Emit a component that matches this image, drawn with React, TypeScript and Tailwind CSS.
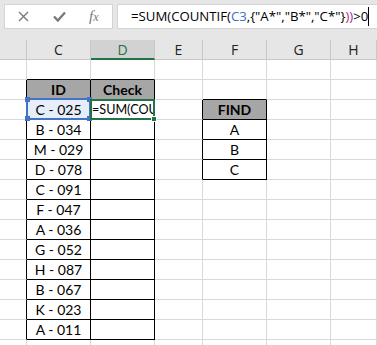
const ids = [
  "C - 025",
  "B - 034",
  "M - 029",
  "D - 078",
  "C - 091",
  "F - 047",
  "A - 036",
  "G - 052",
  "H - 087",
  "B - 067",
  "K - 023",
  "A - 011",
];

const find = ["FIND", "A", "B", "C"];
const letters = ["", "C", "D", "E", "F", "G", "H"];

// rows 0..14 under the column header, cols 0..6
function inTable(r: number, c: number) {
  if ((c === 1 || c === 2) && r >= 1 && r <= 13) return true;
  if (c === 4 && r >= 2 && r <= 5) return true;
  return false;
}

function cellText(r: number, c: number) {
  if (r === 1 && c === 1) return "ID";
  if (r === 1 && c === 2) return "Check";
  if (c === 1 && r >= 2 && r <= 13) return ids[r - 2];
  if (c === 4 && r >= 2 && r <= 5) return find[r - 2];
  return "";
}

function isHead(r: number, c: number) {
  return (r === 1 && (c === 1 || c === 2)) || (r === 2 && c === 4);
}

function Cell({ r, c }: { r: number; c: number }) {
  const rightBlack = inTable(r, c) || inTable(r, c + 1);
  const bottomBlack = inTable(r, c) || inTable(r + 1, c);
  const head = isHead(r, c);
  const selected = r === 2 && c === 1;
  const active = r === 2 && c === 2;

  return (
    <div
      className={[
        "relative h-5 border-r border-b flex items-center justify-center text-[14px] leading-none text-black whitespace-nowrap",
        rightBlack ? "border-r-black" : "border-r-[#d9d9d9]",
        bottomBlack ? "border-b-black" : "border-b-[#d9d9d9]",
        head ? "bg-[#a6a6a6] font-bold" : selected ? "bg-[#e6eef9]" : "bg-white",
      ].join(" ")}
    >
      {active ? (
        <span className="absolute left-[1px] top-0 h-full flex items-center overflow-hidden w-[62px] text-[12.6px] pt-[1px]">
          =SUM(COU
        </span>
      ) : (
        <span className="pt-[1px]">{cellText(r, c)}</span>
      )}
      {selected && (
        <div className="absolute -left-[1px] -top-[2px] -right-[1px] -bottom-[1px] border-2 border-[#4472c4] z-10">
          <div className="absolute -left-[3px] -top-[3px] w-[5px] h-[5px] bg-[#4472c4]" />
          <div className="absolute -right-[3px] -top-[3px] w-[5px] h-[5px] bg-[#4472c4]" />
          <div className="absolute -left-[3px] -bottom-[3px] w-[5px] h-[5px] bg-[#4472c4]" />
          <div className="absolute -right-[3px] -bottom-[3px] w-[5px] h-[5px] bg-[#4472c4]" />
        </div>
      )}
      {active && (
        <div className="absolute -left-[1px] -top-[1px] -right-[1px] -bottom-[1px] border-2 border-[#217346] z-20">
          <div className="absolute -right-[4px] -bottom-[4px] w-[6px] h-[6px] bg-[#217346] border border-white" />
        </div>
      )}
    </div>
  );
}

export default function App() {
  return (
    <div className="w-[377px] h-[345px] overflow-hidden bg-white font-['Lato',sans-serif]">
      {/* Formula bar */}
      <div className="h-10 bg-[#e6e6e6] flex items-start pt-1 gap-1 pl-1">
        <div className="w-[109px] h-[25px] bg-white border border-[#d4d4d4] flex items-center text-[#777]">
          <svg width="11" height="11" viewBox="0 0 11 11" className="ml-[13px]">
            <path d="M1 1 L10 10 M10 1 L1 10" stroke="#7a7a7a" strokeWidth="1.4" fill="none" />
          </svg>
          <svg width="13" height="11" viewBox="0 0 13 11" className="ml-[24px]">
            <path d="M1 5.5 L4.8 9.5 L12 1.5" stroke="#7a7a7a" strokeWidth="2.4" fill="none" />
          </svg>
          <span className="ml-[23px] font-['Liberation_Serif',serif] italic text-[15px] leading-none">
            f<span className="text-[12px]">x</span>
          </span>
        </div>
        <div className="flex-1 h-[25px] bg-white border border-[#d4d4d4] border-r-0 flex items-center pl-[13px] font-['Open_Sans',sans-serif] text-[13.2px] text-black whitespace-nowrap">
          <span>=SUM(COUNTIF(</span>
          <span className="text-[#3a6fc4]">C3</span>
          <span>,&#123;"A*","B*","C*"&#125;</span>
          <span className="text-[#d0245a]">)</span>
          <span className="text-[#7a38b0]">)</span>
          <span>&gt;0</span>
          <span className="inline-block w-px h-[19px] bg-black" />
        </div>
      </div>

      {/* Grid */}
      <div className="grid grid-cols-[27px_64px_64px_48px_64px_64px_1fr]">
        {letters.map((l, i) => (
          <div
            key={l + i}
            className={[
              "h-5 flex items-center justify-center text-[14px] font-['Open_Sans',sans-serif] border-r border-r-[#c8c8c8]",
              i === 2
                ? "bg-[#d2d2d2] text-[#217346] border-b-2 border-b-[#217346]"
                : "bg-[#e6e6e6] text-[#222] border-b border-b-[#c8c8c8]",
            ].join(" ")}
          >
            {l}
          </div>
        ))}
        {Array.from({ length: 15 }).map((_, r) =>
          letters.map((_, c) => <Cell key={r + "-" + c} r={r} c={c} />)
        )}
      </div>
    </div>
  );
}
